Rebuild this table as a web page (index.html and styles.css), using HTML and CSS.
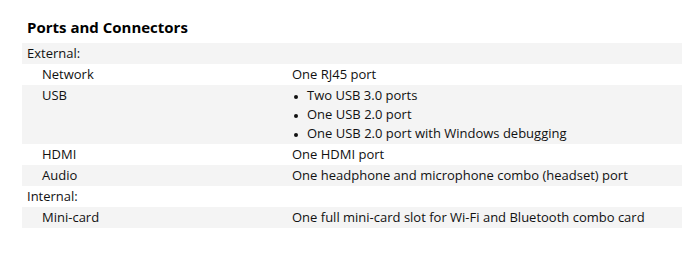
FILE: index.html
```html
<!DOCTYPE html>
<html lang="en">

<head>
  <meta charset="UTF-8" />
  <meta name="viewport" content="width=device-width, initial-scale=1" />
  <title>Ports and Connectors</title>
  <link rel="stylesheet" href="styles.css">
</head>

<body>
  <div class="container">
    <h2>Ports and Connectors</h2>

    <table class="specs">
      <tr class="group">
        <td colspan="2">External:</td>
      </tr>
      <tr>
        <td class="label">Network</td>
        <td>One RJ45 port</td>
      </tr>
      <tr>
        <td class="label">USB</td>
        <td>
          <ul>
            <li>Two USB 3.0 ports</li>
            <li>One USB 2.0 port</li>
            <li>One USB 2.0 port with Windows debugging</li>
          </ul>
        </td>
      </tr>
      <tr>
        <td class="label">HDMI</td>
        <td>One HDMI port</td>
      </tr>
      <tr>
        <td class="label">Audio</td>
        <td>One headphone and microphone combo (headset) port</td>
      </tr>
      <tr class="group">
        <td colspan="2">Internal:</td>
      </tr>
      <tr>
        <td class="label">Mini-card</td>
        <td>One full mini-card slot for Wi-Fi and Bluetooth combo card</td>
      </tr>
    </table>
  </div>
</body>

</html>
```

FILE: styles.css
```css
* {
  box-sizing: border-box;
  margin: 0;
  padding: 0;
}

body {
  font-family: "Open Sans", Arial, sans-serif;
  background-color: #fff;
  color: #111;
  padding: 17px 2px 0 22px;
}

h2 {
  font-size: 15px;
  font-weight: bold;
  color: #000;
  padding-left: 5px;
  line-height: 20px;
  margin-bottom: 6px;
}

.specs {
  width: 660px;
  border-collapse: collapse;
  font-size: 13px;
  line-height: 19px;
}

.specs td {
  padding: 1px 5px;
  vertical-align: top;
}

.specs tr:nth-child(odd) {
  background-color: #f4f4f4;
}

.specs td.label {
  width: 265px;
  padding-left: 20px;
}

.specs ul {
  list-style: none;
}

.specs li {
  position: relative;
  padding-left: 15px;
}

/* bullet dot, a bit heavier than the font's own */
.specs li::before {
  content: "";
  position: absolute;
  left: 2px;
  top: 9px;
  width: 4px;
  height: 4px;
  border-radius: 50%;
  background-color: #111;
}
```
